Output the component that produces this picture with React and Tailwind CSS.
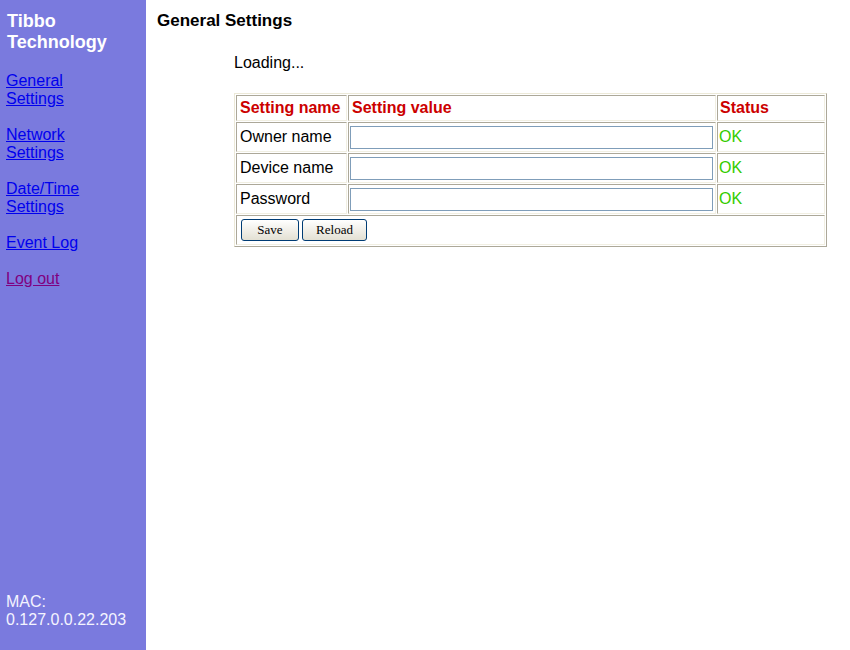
export default function App() {
  const rows = ['Owner name', 'Device name', 'Password']
  return (
    <div className="flex h-[650px] w-full bg-white font-['Liberation_Sans',Arial,sans-serif] text-[16px] text-black">
      <aside className="flex w-[146px] shrink-0 flex-col bg-[#7a7ade] pb-[21px] pl-[6px] pr-[7px] pt-[11px]">
        <div className="ml-[1px] text-[18px] font-bold leading-[21px] text-white">
          Tibbo
          <br />
          Technology
        </div>
        <nav className="mt-[19px] flex flex-col gap-[18px] leading-[18px]">
          <a href="#" className="text-[#0000ee] underline">
            General
            <br />
            Settings
          </a>
          <a href="#" className="text-[#0000ee] underline">
            Network
            <br />
            Settings
          </a>
          <a href="#" className="text-[#0000ee] underline">
            Date/Time
            <br />
            Settings
          </a>
          <a href="#" className="text-[#0000ee] underline">
            Event Log
          </a>
          <a href="#" className="text-[#800080] underline">
            Log out
          </a>
        </nav>
        <div className="mt-auto leading-[18px] text-[#f4f4ff]">
          MAC:
          <br />
          0.127.0.0.22.203
        </div>
      </aside>

      <main className="flex-1 pl-[11px] pt-[11px]">
        <h1 className="text-[17px] font-bold leading-[20px]">General Settings</h1>
        <div className="ml-[77px] mt-[23px]">
          <p className="leading-[18px]">Loading...</p>
          <table className="mt-[21px] w-[593px] table-fixed border-separate border-spacing-[1px] border border-b-[#aca899] border-l-[#ece9d8] border-r-[#aca899] border-t-[#ece9d8]">
            <thead>
              <tr>
                <th className="h-[25px] w-[111px] border border-b-[#f1efe2] border-l-[#aca899] border-r-[#f1efe2] border-t-[#aca899] px-[3px] text-left font-bold text-[#cc0000]">
                  Setting name
                </th>
                <th className="h-[25px] w-[368px] border border-b-[#f1efe2] border-l-[#aca899] border-r-[#f1efe2] border-t-[#aca899] px-[3px] text-left font-bold text-[#cc0000]">
                  Setting value
                </th>
                <th className="h-[25px] border border-b-[#f1efe2] border-l-[#aca899] border-r-[#f1efe2] border-t-[#aca899] px-[2px] text-left font-bold text-[#cc0000]">
                  Status
                </th>
              </tr>
            </thead>
            <tbody>
              {rows.map((r) => (
                <tr key={r}>
                  <td className="h-[30px] border border-b-[#f1efe2] border-l-[#aca899] border-r-[#f1efe2] border-t-[#aca899] px-[3px]">
                    {r}
                  </td>
                  <td className="h-[30px] border border-b-[#f1efe2] border-l-[#aca899] border-r-[#f1efe2] border-t-[#aca899] pl-[1px] pr-[2px]">
                    <input
                      type={r === 'Password' ? 'password' : 'text'}
                      className="block h-[23px] w-[363px] border border-[#7f9db9] bg-white px-1 text-[13px] outline-none"
                    />
                  </td>
                  <td className="h-[30px] border border-b-[#f1efe2] border-l-[#aca899] border-r-[#f1efe2] border-t-[#aca899] px-[1px] text-[#33cc00]">
                    OK
                  </td>
                </tr>
              ))}
              <tr>
                <td
                  colSpan={3}
                  className="h-[30px] border border-b-[#f1efe2] border-l-[#aca899] border-r-[#f1efe2] border-t-[#aca899] px-[4px]"
                >
                  <div className="flex gap-[3px]">
                    <button className="h-[22px] w-[58px] rounded-[3px] border border-[#003c74] bg-gradient-to-b from-white to-[#e3e0d3] font-['Liberation_Serif','Times_New_Roman',serif] text-[13px] font-normal leading-[18px] text-black">
                      Save
                    </button>
                    <button className="h-[22px] w-[65px] rounded-[3px] border border-[#003c74] bg-gradient-to-b from-white to-[#e3e0d3] font-['Liberation_Serif','Times_New_Roman',serif] text-[13px] font-normal leading-[18px] text-black">
                      Reload
                    </button>
                  </div>
                </td>
              </tr>
            </tbody>
          </table>
        </div>
      </main>
    </div>
  )
}
